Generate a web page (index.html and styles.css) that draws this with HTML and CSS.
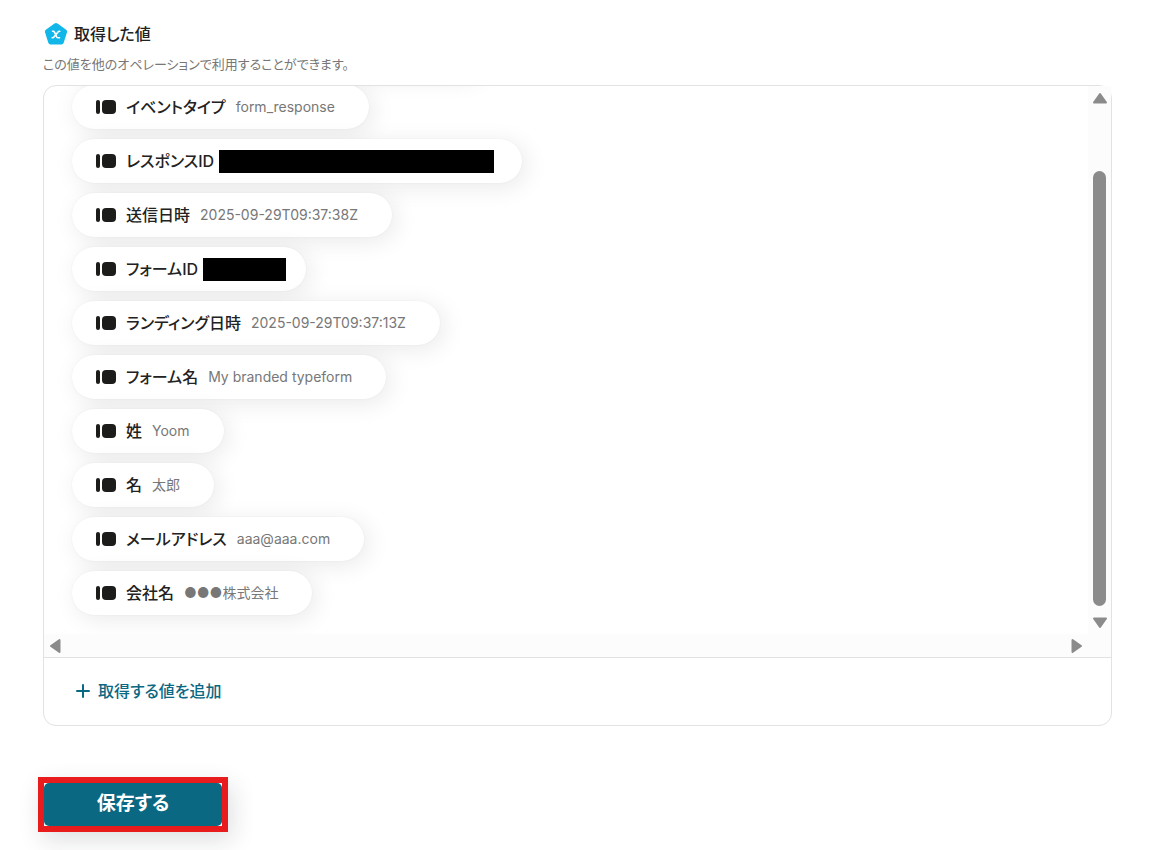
FILE: index.html
```html
<!DOCTYPE html>
<html lang="ja">
<head>
  <meta charset="UTF-8">
  <meta name="viewport" content="width=device-width, initial-scale=1.0">
  <title>取得した値</title>
  <link rel="stylesheet" href="styles.css">
</head>
<body>
  <svg width="0" height="0" class="defs">
    <symbol id="typeform" viewBox="0 0 20 14">
      <rect x="0" y="0" width="4" height="14" rx="2"/>
      <rect x="6" y="0" width="14" height="14" rx="4"/>
    </symbol>
  </svg>

  <div class="page">
    <div class="heading">
      <svg class="heading-icon" viewBox="0 0 24 24">
        <path d="M10.5 1.6Q12 .6 13.5 1.6L22.2 7.8Q23.5 8.8 23 10.3L19.7 20.8Q19.2 22.4 17.5 22.4H6.500Q4.800 22.4 4.300 20.8L1 10.3Q.5 8.8 1.8 7.8Z" fill="#12b7ea"/>
        <path d="M8.500 9.300H9.300Q10.100 9.300 10.600 10.300L12.700 14.800Q13.200 15.800 14.100 15.800H15.500M15.700 9.300Q14.700 9.200 13.800 10.300L10.200 14.700Q9.200 15.900 8.200 15.800" fill="none" stroke="#fff" stroke-width="1.6" stroke-linecap="round"/>
      </svg>
      <h2>取得した値</h2>
    </div>
    <p class="note">この値を他のオペレーションで利用することができます。</p>

    <div class="panel">
      <div class="scroll">
        <ul class="values">
          <li class="chip chip-above"></li>
          <li class="chip"><svg class="icon"><use href="#typeform"/></svg><span class="label">イベントタイプ</span><span class="value">form_response</span></li>
          <li class="chip"><svg class="icon"><use href="#typeform"/></svg><span class="label">レスポンスID</span><span class="mask mask-long"></span></li>
          <li class="chip"><svg class="icon"><use href="#typeform"/></svg><span class="label">送信日時</span><span class="value">2025-09-29T09:37:38Z</span></li>
          <li class="chip"><svg class="icon"><use href="#typeform"/></svg><span class="label">フォームID</span><span class="mask mask-short"></span></li>
          <li class="chip"><svg class="icon"><use href="#typeform"/></svg><span class="label">ランディング日時</span><span class="value">2025-09-29T09:37:13Z</span></li>
          <li class="chip"><svg class="icon"><use href="#typeform"/></svg><span class="label">フォーム名</span><span class="value">My branded typeform</span></li>
          <li class="chip"><svg class="icon"><use href="#typeform"/></svg><span class="label">姓</span><span class="value">Yoom</span></li>
          <li class="chip"><svg class="icon"><use href="#typeform"/></svg><span class="label">名</span><span class="value">太郎</span></li>
          <li class="chip"><svg class="icon"><use href="#typeform"/></svg><span class="label">メールアドレス</span><span class="value">aaa@aaa.com</span></li>
          <li class="chip"><svg class="icon"><use href="#typeform"/></svg><span class="label">会社名</span><span class="value">●●●株式会社</span></li>
        </ul>
        <div class="rail rail-y">
          <svg class="arrow" viewBox="0 0 16 12"><path d="M8 2L14 10.5H2Z"/></svg>
          <div class="thumb"></div>
          <svg class="arrow" viewBox="0 0 16 12"><path d="M2 1.5H14L8 10Z"/></svg>
        </div>
        <div class="rail rail-x">
          <svg class="arrow arrow-side" viewBox="0 0 12 16"><path d="M10.5 2V14L2 8Z"/></svg>
          <svg class="arrow arrow-side" viewBox="0 0 12 16"><path d="M1.5 2V14L10 8Z"/></svg>
        </div>
      </div>
      <div class="panel-footer">
        <button type="button" class="add">
          <svg class="plus" viewBox="0 0 16 16"><path d="M8 2V14M2 8H14"/></svg>
          取得する値を追加
        </button>
      </div>
    </div>

    <div class="save-frame">
      <button type="button" class="save">保存する</button>
    </div>
  </div>
</body>
</html>
```

FILE: styles.css
```css
* {
  box-sizing: border-box;
}
body {
  margin: 0;
  background: #fff;
  color: #222;
  font-family: Inter, "Noto Sans CJK JP", sans-serif;
  font-feature-settings: "palt";
}
button {
  font: inherit;
  font-feature-settings: inherit;
  border: 0;
  cursor: pointer;
}
.defs {
  position: absolute;
}
.page {
  padding: 21px 64px 18px 43px;
}
.heading {
  display: flex;
  align-items: center;
  gap: 6px;
  height: 25px;
  padding-left: 1px;
}
.heading-icon {
  width: 24px;
  height: 24px;
}
h2 {
  margin: 0;
  font-size: 16px;
  line-height: 24px;
  font-weight: 500;
}
.note {
  margin: 9px 0 11px;
  color: #777;
  font-size: 13px;
  line-height: 19px;
}
.panel {
  border: 1px solid #e2e2e2;
  border-radius: 13px;
}
.scroll {
  display: grid;
  grid-template-columns: 1fr 23px;
  grid-template-rows: 548px 23px;
}
.values {
  display: flex;
  flex-direction: column;
  justify-content: flex-end;
  align-items: flex-start;
  gap: 10px;
  margin: 0;
  padding: 0 28px 19px;
  list-style: none;
  overflow: hidden;
  border-top-left-radius: 12px;
}
.chip {
  display: flex;
  align-items: center;
  flex-shrink: 0;
  height: 44px;
  padding: 0 24px;
  border-radius: 22px;
  background: #fff;
  box-shadow: 0 0 2px rgba(0, 0, 0, 0.06), 4px 4px 24px rgba(0, 0, 0, 0.09);
}
.chip-above {
  width: 410px;
}
.icon {
  width: 20px;
  height: 14px;
  margin-right: 10px;
  fill: #1c1c1a;
}
.label {
  font-size: 16px;
  line-height: 24px;
  font-weight: 500;
}
.value {
  margin: 0 10px;
  color: #777;
  font-size: 14px;
  line-height: 24px;
}
.mask {
  height: 23px;
  margin: 0 4px 0 5px;
  background: #000;
}
.mask-long {
  width: 275px;
}
.mask-short {
  width: 83px;
  margin-right: -4px;
}
.rail {
  display: flex;
  align-items: center;
  background: #fcfcfc;
}
.rail-y {
  flex-direction: column;
  padding: 6px 0 5px;
}
.rail-x {
  grid-column: 1 / 3;
  justify-content: space-between;
  padding: 0 28px 0 5px;
}
.thumb {
  flex: 1;
  width: 13px;
  margin: 67px 0 11px;
  border-radius: 7px;
  background: #8b8b8b;
}
.arrow {
  width: 16px;
  height: 12px;
  fill: #8b8b8b;
  stroke: #8b8b8b;
  stroke-width: 2;
  stroke-linejoin: round;
}
.arrow-side {
  width: 12px;
  height: 16px;
}
.panel-footer {
  padding: 21px 31px 22px;
  border-top: 1px solid #e2e2e2;
}
.add {
  display: flex;
  align-items: center;
  gap: 7px;
  padding: 0;
  background: none;
  color: #0b6882;
  font-size: 16px;
  line-height: 24px;
  font-weight: 500;
}
.plus {
  width: 16px;
  height: 16px;
  fill: none;
  stroke: #0b6882;
  stroke-width: 2;
  stroke-linecap: round;
}
.save-frame {
  width: 190px;
  margin: 51px 0 0 -5px;
  border: 6px solid #e81c1c;
  box-shadow: 4px 8px 24px rgba(20, 30, 50, 0.14);
}
.save {
  display: block;
  width: 100%;
  height: 43px;
  padding: 0 0 1px;
  border-radius: 5px;
  background: #0b6882;
  color: #fff;
  font-size: 19px;
  line-height: 24px;
  font-weight: 700;
}
```
